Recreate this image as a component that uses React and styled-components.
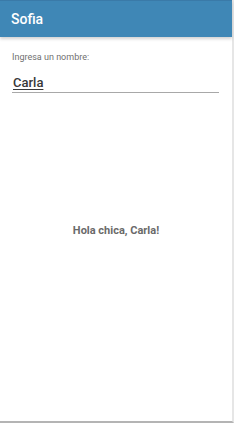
import styled, { createGlobalStyle } from 'styled-components'

const Global = createGlobalStyle`
  html, body {
    margin: 0;
    padding: 0;
    background: #fff;
    font-family: Roboto, 'Liberation Sans', sans-serif;
  }
`

const Screen = styled.div`
  width: 232px;
  height: 421px;
  display: flex;
  flex-direction: column;
  border-right: 2px solid #e6e6e6;
  border-bottom: 2px solid #b4b4b4;
`

const Bar = styled.div`
  height: 37px;
  background: #3f87b6;
  border-top: 1px solid #3a7aa8;
  box-shadow: 0 2px 3px rgba(0, 0, 0, 0.18);
  display: flex;
  align-items: center;
  padding-left: 11px;
  color: #fff;
  font-size: 14px;
  font-weight: 500;
  box-sizing: border-box;
`

const Form = styled.div`
  padding: 15px 13px 0 12px;
  display: flex;
  flex-direction: column;
`

const Label = styled.div`
  font-size: 9px;
  color: #707070;
`

const Field = styled.div`
  margin-top: 13px;
  padding-left: 1px;
  padding-bottom: 2px;
  border-bottom: 1px solid #a8a8a8;
  font-size: 13px;
  font-weight: 500;
  color: #383838;
  text-decoration: underline;
  text-underline-offset: 2px;
  text-decoration-thickness: 1px;
`

const Greeting = styled.div`
  flex: 1;
  display: flex;
  align-items: center;
  justify-content: center;
  padding-bottom: 54px;
  font-size: 11px;
  font-weight: bold;
  color: #6a6a6a;
`

export default function App() {
  return (
    <>
      <Global />
      <Screen>
        <Bar>Sofia</Bar>
        <Form>
          <Label>Ingresa un nombre:</Label>
          <Field>Carla</Field>
        </Form>
        <Greeting>Hola chica, Carla!</Greeting>
      </Screen>
    </>
  )
}
